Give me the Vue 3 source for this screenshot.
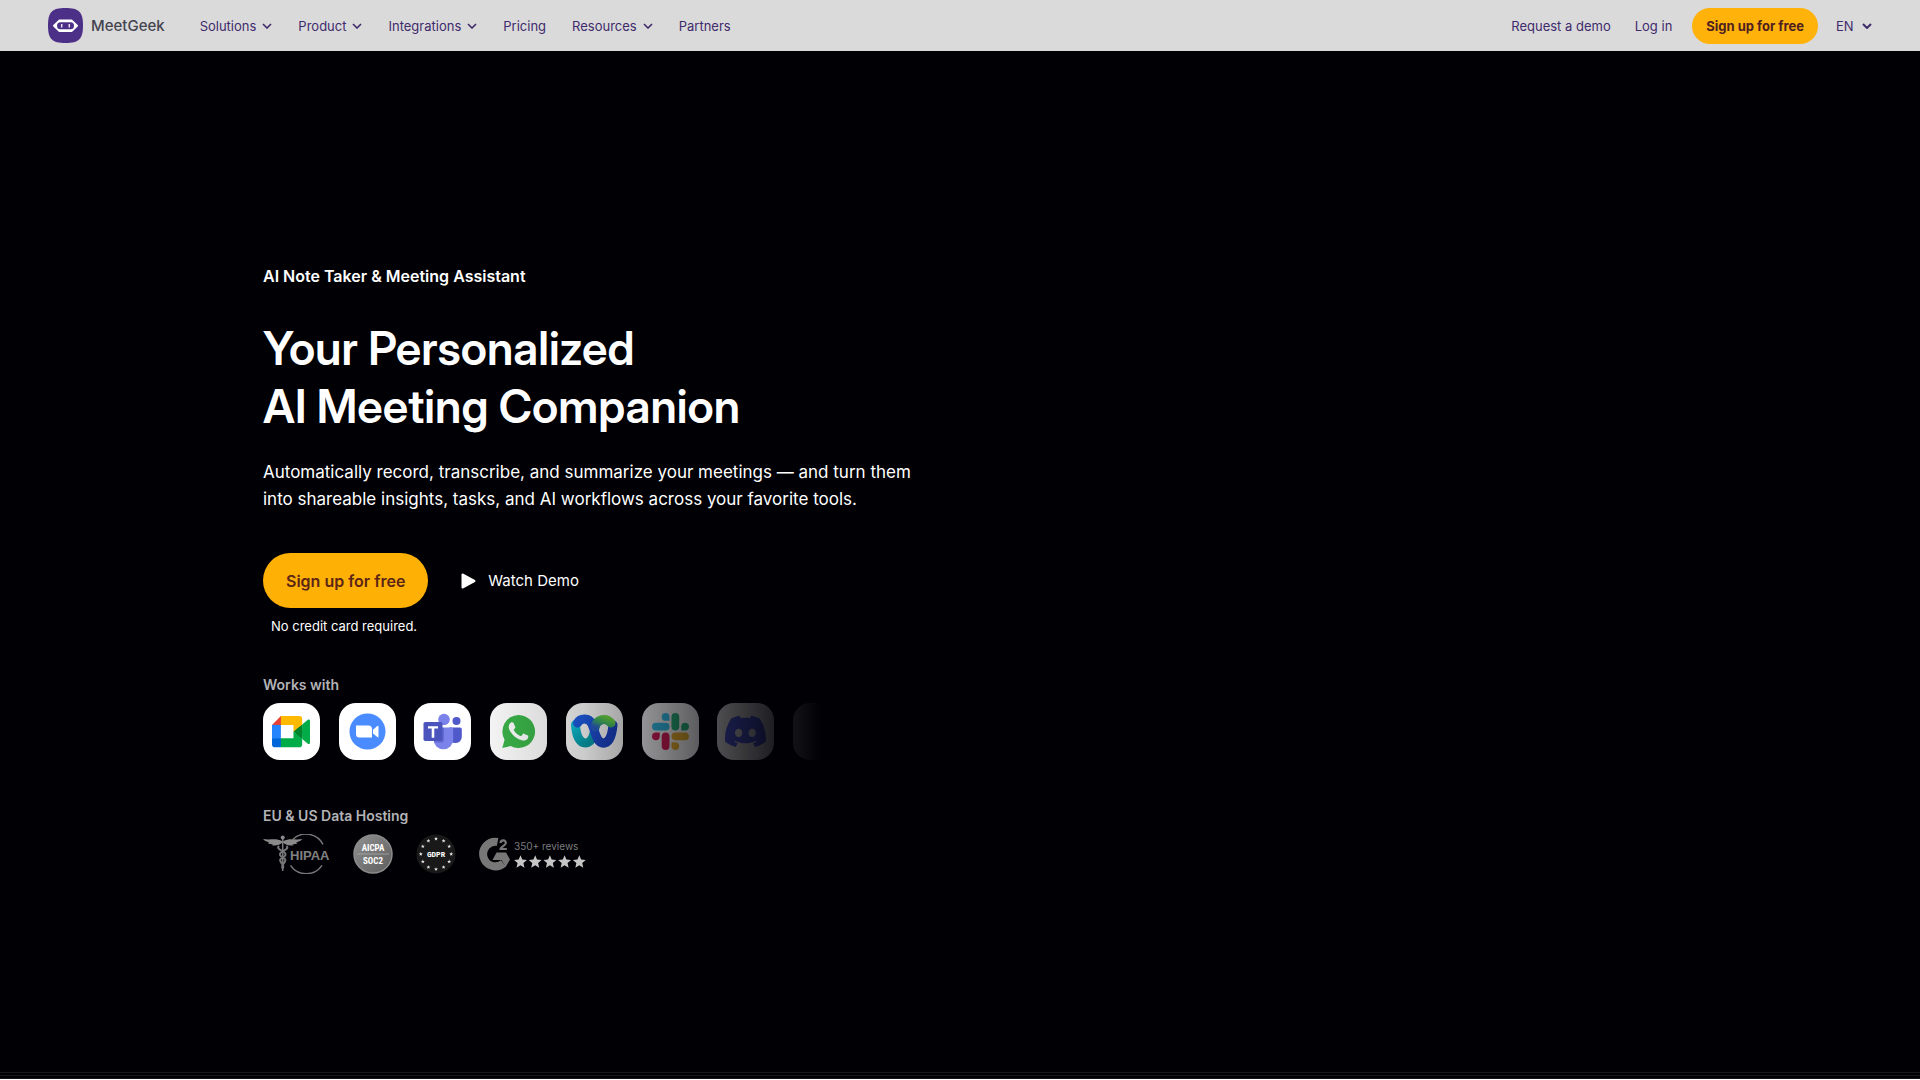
<template>
  <div class="page">
    <header class="header">
      <a class="brand" href="#">
        <svg class="brand-logo" viewBox="0 0 35 35" aria-hidden="true">
          <path fill="#4c3087" d="M17.500 0C31 0 35 4 35 17.500S31 35 17.500 35 0 31 0 17.500 4 0 17.500 0z" />
          <path fill="#fff" stroke="#fff" stroke-width="2" stroke-linejoin="round" d="M6 17.800l5.500-5.300h12l5.500 5.300-5.500 5.300h-12z" />
          <rect x="9" y="14.300" width="17" height="7" rx="3.500" fill="#4c3087" />
          <path stroke="#e6e0f0" stroke-width="1.500" d="M13.700 16v3.400M21.300 16v3.400" />
        </svg>
        <span>MeetGeek</span>
      </a>
      <nav class="nav">
        <template v-for="item in navItems" :key="item.label">
          <button v-if="item.menu" type="button" class="nav-item">
            {{ item.label }}
            <svg class="chevron" viewBox="0 0 10 6" aria-hidden="true"><path d="M1 1l4 4 4-4" /></svg>
          </button>
          <a v-else href="#" class="nav-item">{{ item.label }}</a>
        </template>
      </nav>
      <div class="actions">
        <a href="#" class="nav-item">Request a demo</a>
        <a href="#" class="nav-item">Log in</a>
        <button type="button" class="signup-small">Sign up for free</button>
        <label class="language">
          <select v-model="language" aria-label="EN">
            <option>EN</option>
          </select>
          <svg class="chevron" viewBox="0 0 10 6" aria-hidden="true"><path d="M1 1l4 4 4-4" /></svg>
        </label>
      </div>
    </header>

    <main class="hero">
      <p class="eyebrow">AI Note Taker &amp; Meeting Assistant</p>
      <h1>Your Personalized<br>AI Meeting Companion</h1>
      <p class="lead">
        Automatically record, transcribe, and summarize your meetings — and turn them<br>
        into shareable insights, tasks, and AI workflows across your favorite tools.
      </p>
      <div class="cta">
        <button type="button" class="signup">Sign up for free</button>
        <button type="button" class="watch">
          <svg class="play" viewBox="0 0 15 16" aria-hidden="true">
            <path d="M1.500 1.500v13L13.500 8z" fill="#fff" stroke="#fff" stroke-width="2" stroke-linejoin="round" />
          </svg>
          Watch Demo
        </button>
      </div>
      <p class="note">No credit card required.</p>

      <h2>Works with</h2>
      <div class="apps">
        <div class="tile">
          <svg viewBox="0 0 57 57">
            <g transform="translate(9 13) scale(.434)">
              <path fill="#00832d" d="M49.500 36l8.530 9.750 11.470 7.330 2-17.020-2-16.640-11.690 6.440z" />
              <path fill="#0066da" d="M0 51.500V66c0 3.315 2.685 6 6 6h14.500l3-10.960-3-9.540-9.950-3z" />
              <path fill="#e94235" d="M20.500 0L0 20.500l10.550 3 9.950-3 2.950-9.410z" />
              <path fill="#2684fc" d="M20.500 20.500H0v31h20.500z" />
              <path fill="#00ac47" d="M82.600 8.680L69.500 19.420v33.660l13.160 10.790c1.970 1.540 4.850.135 4.850-2.370V11c0-2.535-2.945-3.925-4.910-2.320zM49.500 36v15.500h-29V72h43c3.315 0 6-2.685 6-6V53.080z" />
              <path fill="#ffba00" d="M63.500 0h-43v20.500h29V36l20-16.570V6c0-3.315-2.685-6-6-6z" />
            </g>
          </svg>
        </div>
        <div class="tile">
          <svg viewBox="0 0 57 57">
            <circle cx="28.500" cy="28.500" r="18" fill="#4a8cff" />
            <path fill="#fff" d="M17 22.500h12.500a3.500 3.500 0 0 1 3.500 3.500v8.500H20.500a3.500 3.500 0 0 1-3.500-3.500zM34 26.800l4.300-3.700q1.200-.8 1.200.6v9.800q0 1.400-1.200.6L34 30.400z" />
          </svg>
        </div>
        <div class="tile">
          <svg viewBox="0 0 57 57">
            <circle cx="42.500" cy="18" r="4" fill="#5059c9" />
            <path fill="#5059c9" d="M35 24.500h11a1.800 1.800 0 0 1 1.800 1.800V34a6.500 6.500 0 0 1-12.800 1z" />
            <circle cx="30" cy="16.500" r="5.800" fill="#7b83eb" />
            <path fill="#7b83eb" d="M22 24.500h15.500a1.700 1.700 0 0 1 1.700 1.700V36.500a9.800 9.800 0 0 1-19.600 0z" />
            <path fill="#464eb8" opacity=".45" d="M22 24.500h8v13a2 2 0 0 1-2 2h-8z" />
            <rect x="9.500" y="19" width="19" height="19" rx="1.800" fill="#4b53bc" />
            <path fill="#fff" d="M14 23.200h10v2.200h-3.700v9.400h-2.600v-9.400H14z" />
          </svg>
        </div>
        <div class="tile">
          <svg viewBox="0 0 57 57">
            <path fill="#3bb54a" d="M28.500 12a16.500 16.500 0 1 1-7.800 31L12.300 45l2.300-8.200A16.500 16.500 0 0 1 28.500 12z" />
            <path fill="#fff" transform="translate(9 9) scale(1.620)" d="M17.472 14.382c-.297-.149-1.758-.867-2.030-.967-.273-.099-.471-.148-.670.150-.197.297-.767.966-.940 1.164-.173.199-.347.223-.644.075-.297-.150-1.255-.463-2.390-1.475-.883-.788-1.480-1.761-1.653-2.059-.173-.297-.018-.458.130-.606.134-.133.298-.347.446-.520.149-.174.198-.298.298-.497.099-.198.050-.371-.025-.520-.075-.149-.669-1.612-.916-2.207-.242-.579-.487-.500-.669-.510-.173-.008-.371-.010-.570-.010-.198 0-.520.074-.792.372-.272.297-1.040 1.016-1.040 2.479 0 1.462 1.065 2.875 1.213 3.074.149.198 2.096 3.200 5.077 4.487.709.306 1.262.489 1.694.625.712.227 1.360.195 1.871.118.571-.085 1.758-.719 2.006-1.413.248-.694.248-1.289.173-1.413-.074-.124-.272-.198-.570-.347" />
          </svg>
        </div>
        <div class="tile">
          <svg viewBox="0 0 57 57">
            <defs>
              <linearGradient id="webex-teal" x1="0" y1="0" x2="0.600" y2="1">
                <stop offset="0" stop-color="#10c8e0" />
                <stop offset="1" stop-color="#079ca8" />
              </linearGradient>
              <linearGradient id="webex-blue" x1="0" y1="0" x2="1" y2="1">
                <stop offset="0" stop-color="#1f5fe8" />
                <stop offset="1" stop-color="#1c44c4" />
              </linearGradient>
              <linearGradient id="webex-green" x1="0" y1="1" x2="1" y2="0">
                <stop offset="0" stop-color="#2a5fc8" />
                <stop offset="0.500" stop-color="#3fb06a" />
                <stop offset="1" stop-color="#6edb45" />
              </linearGradient>
            </defs>
            <g fill="none" stroke-width="9" stroke-linecap="round">
              <path stroke="url(#webex-teal)" d="M9.500 21.500c.5 11 4 18.500 10 18.500 6.500 0 9-9 9.500-16" />
              <path stroke="#1c44c4" d="M47 22c-1 11-4 18-9.500 18" />
              <path stroke="url(#webex-blue)" d="M11.500 20c3-5.500 11.500-5.500 14.500 1 3 6.500 4 19 11.500 19" />
              <path stroke="url(#webex-green)" d="M29 24c2-8 11-10 16-4" />
            </g>
          </svg>
        </div>
        <div class="tile">
          <svg viewBox="0 0 57 57">
            <g transform="translate(10 10) scale(1.540)">
              <path fill="#e01e5a" d="M5.042 15.165a2.528 2.528 0 0 1-2.520 2.523A2.528 2.528 0 0 1 0 15.165a2.527 2.527 0 0 1 2.522-2.520h2.520v2.520zM6.313 15.165a2.527 2.527 0 0 1 2.521-2.520 2.527 2.527 0 0 1 2.521 2.520v6.313A2.528 2.528 0 0 1 8.834 24a2.528 2.528 0 0 1-2.521-2.522v-6.313z" />
              <path fill="#36c5f0" d="M8.834 5.042a2.528 2.528 0 0 1-2.521-2.520A2.528 2.528 0 0 1 8.834 0a2.528 2.528 0 0 1 2.521 2.522v2.520H8.834zM8.834 6.313a2.528 2.528 0 0 1 2.521 2.521 2.528 2.528 0 0 1-2.521 2.521H2.522A2.528 2.528 0 0 1 0 8.834a2.528 2.528 0 0 1 2.522-2.521h6.312z" />
              <path fill="#2eb67d" d="M18.956 8.834a2.528 2.528 0 0 1 2.522-2.521A2.528 2.528 0 0 1 24 8.834a2.528 2.528 0 0 1-2.522 2.521h-2.522V8.834zM17.688 8.834a2.528 2.528 0 0 1-2.523 2.521 2.527 2.527 0 0 1-2.520-2.521V2.522A2.527 2.527 0 0 1 15.165 0a2.528 2.528 0 0 1 2.523 2.522v6.312z" />
              <path fill="#ecb22e" d="M15.165 18.956a2.528 2.528 0 0 1 2.523 2.522A2.528 2.528 0 0 1 15.165 24a2.527 2.527 0 0 1-2.520-2.522v-2.522h2.520zM15.165 17.688a2.527 2.527 0 0 1-2.520-2.523 2.526 2.526 0 0 1 2.520-2.520h6.313A2.527 2.527 0 0 1 24 15.165a2.528 2.528 0 0 1-2.522 2.523h-6.313z" />
            </g>
          </svg>
        </div>
        <div class="tile">
          <svg viewBox="0 0 57 57">
            <path fill="#5865f2" transform="translate(8 8) scale(1.700)" d="M20.317 4.370a19.791 19.791 0 0 0-4.885-1.515.074.074 0 0 0-.079.037c-.211.375-.445.865-.608 1.250-1.845-.276-3.680-.276-5.487 0-.164-.393-.406-.874-.618-1.250a.077.077 0 0 0-.079-.037 19.736 19.736 0 0 0-4.885 1.515.070.070 0 0 0-.032.028C.533 9.046-.319 13.580.099 18.058a.082.082 0 0 0 .031.056c2.053 1.508 4.041 2.423 5.993 3.029a.078.078 0 0 0 .084-.028c.462-.630.873-1.295 1.226-1.994a.076.076 0 0 0-.042-.106c-.653-.248-1.274-.550-1.872-.892a.077.077 0 0 1-.008-.128c.126-.094.252-.192.372-.291a.074.074 0 0 1 .078-.011c3.928 1.793 8.180 1.793 12.061 0a.074.074 0 0 1 .079.010c.120.099.246.198.373.292a.077.077 0 0 1-.007.128 12.299 12.299 0 0 1-1.873.891.077.077 0 0 0-.041.107c.360.698.772 1.363 1.225 1.993a.076.076 0 0 0 .084.029c1.961-.607 3.950-1.522 6.002-3.029a.077.077 0 0 0 .031-.055c.500-5.177-.838-9.674-3.549-13.660a.061.061 0 0 0-.031-.029zM8.020 15.331c-1.183 0-2.157-1.086-2.157-2.419 0-1.333.956-2.419 2.157-2.419 1.211 0 2.176 1.095 2.157 2.419 0 1.333-.956 2.419-2.157 2.419zm7.975 0c-1.183 0-2.157-1.086-2.157-2.419 0-1.333.955-2.419 2.157-2.419 1.211 0 2.176 1.095 2.157 2.419 0 1.333-.946 2.419-2.157 2.419z" />
          </svg>
        </div>
        <div class="tile"></div>
      </div>

      <h2>EU &amp; US Data Hosting</h2>
      <div class="badges">
        <svg class="hipaa" viewBox="0 0 67 40">
          <g fill="none" stroke="#777" stroke-width="1.500">
            <path d="M30 5.300A19 19 0 0 1 60 10.500M27.500 31.300A19 19 0 0 0 59 31.300" />
            <path d="M19.700 3v34" stroke-width="1.600" />
            <path d="M16 12c-4 4 8 5 6.500 9s-7 2.500-5 6.500 4 3 2.500 7M23.500 12c4 4-8 5-6.500 9s7 2.500 5 6.500-4 3-2.500 7" stroke-width="2" />
          </g>
          <g fill="#8a8a8a">
            <path d="M19.500 7.500C13 3.500 8 6.500 0 5c2.500 2.800 5 3 6.500 3.200-.8.400-1.500.500-2 .6 2 1.600 4 1.500 5.500 1.300-.5.500-1 .8-1.400 1 4 1.300 8-.1 10.900-2.600z" />
            <path d="M19.900 7.500C26.400 3.500 31.400 6.500 39.400 5c-2.500 2.800-5 3-6.500 3.200.8.400 1.500.500 2 .6-2 1.600-4 1.500-5.500 1.300.5.500 1 .8 1.400 1-4 1.300-8-.1-10.900-2.600z" />
            <circle cx="19.700" cy="3.500" r="2" />
          </g>
          <text x="27" y="26" class="hipaa-text">HIPAA</text>
        </svg>
        <svg class="round" viewBox="0 0 40 40">
          <defs>
            <linearGradient id="soc-fill" x1="0" y1="0" x2="1" y2="1">
              <stop offset="0" stop-color="#929292" />
              <stop offset="1" stop-color="#5c5c5c" />
            </linearGradient>
          </defs>
          <circle cx="20" cy="20" r="19" fill="url(#soc-fill)" stroke="#8c8c8c" stroke-width="1.500" />
          <path stroke="#b0b0b0" stroke-width="0.700" d="M4 20h32" />
          <text x="20" y="17" class="soc-text">AICPA</text>
          <text x="20" y="30" class="soc-text">SOC2</text>
        </svg>
        <svg class="round" viewBox="0 0 40 40">
          <circle cx="20" cy="20" r="19.500" fill="#191919" />
          <path
            v-for="n in 12"
            :key="n"
            :transform="`rotate(${n * 30} 20 20) translate(20 4.800) rotate(${-n * 30}) scale(.22)`"
            :d="starPath"
            fill="#e4e4e4"
          />
          <text x="20" y="23" class="gdpr-text">GDPR</text>
        </svg>
        <div class="rating">
          <svg class="g2" viewBox="0 0 32 34">
            <path fill="none" stroke="#777" stroke-width="8" d="M18.600 4.900A12.300 12.300 0 1 0 24.400 26.400" />
            <path fill="#777" d="M17.500 15.600H27l4 6.900-4.300 7.500-4.200-7h-9z" />
            <path fill="none" stroke="#777" stroke-width="2.200" d="M21.500 6c.3-3.800 5.800-3.300 5.300.2-.4 2.500-5 3.300-5.300 5.800h6.300" />
          </svg>
          <div class="reviews">
            <span>350+ reviews</span>
            <svg class="stars" viewBox="0 0 73 13">
              <path
                v-for="n in 5"
                :key="n"
                :transform="`translate(${n * 14.700 - 8.200} 7) scale(.75)`"
                :d="starPath"
                fill="#c6c6c6"
              />
            </svg>
          </div>
        </div>
      </div>
    </main>
    <div class="edge"></div>
  </div>
</template>

<script setup>
import { ref } from 'vue';

const language = ref('EN');
const starPath = 'M0-9l2.400 5.800 6.200.5-4.700 4.100 1.400 6.100L0 4.200l-5.300 3.300 1.400-6.100-4.700-4.100 6.200-.5z';

const navItems = ref([
  { label: 'Solutions', menu: true },
  { label: 'Product', menu: true },
  { label: 'Integrations', menu: true },
  { label: 'Pricing', menu: false },
  { label: 'Resources', menu: true },
  { label: 'Partners', menu: false },
]);
</script>

<style>
body {
  margin: 0;
  background: #fff;
}
</style>

<style scoped>
.page {
  display: flex;
  flex-direction: column;
  min-height: calc(100vh - 1px);
  background: #000005;
  color: #fff;
  font-family: Inter, "Liberation Sans", sans-serif;
}

button,
select {
  padding: 0;
  border: 0;
  background: none;
  color: inherit;
  font: inherit;
  cursor: pointer;
}

a {
  color: inherit;
  text-decoration: none;
}

.header {
  display: flex;
  align-items: center;
  box-sizing: border-box;
  height: 51px;
  padding: 0 48px;
  background: #dadadb;
  color: #3f2a6b;
  font-size: 13px;
  line-height: 20px;
}

.brand {
  display: flex;
  align-items: center;
  gap: 8px;
  color: #45434f;
  font-size: 15px;
  font-weight: 500;
}

.brand-logo {
  width: 35px;
  height: 35px;
}

.nav {
  display: flex;
  gap: 26px;
  margin-left: 35px;
}

.nav-item {
  display: flex;
  align-items: center;
  gap: 6px;
}

.chevron {
  width: 10px;
  height: 6px;
  fill: none;
  stroke: currentColor;
  stroke-width: 2;
}

.nav .chevron {
  stroke-width: 1.600;
}

.actions {
  display: flex;
  align-items: center;
  gap: 24px;
  margin-left: auto;
}

.signup-small {
  height: 36px;
  margin: 0 -6px 0 -4px;
  padding: 0 14px;
  border-radius: 18px;
  background: #ffb20a;
  color: #4f2020;
  font-weight: 700;
}

.language {
  display: flex;
  align-items: center;
  gap: 8px;
}

.language select {
  appearance: none;
}

.hero {
  flex: 1;
  width: 720px;
  padding: 212px 0 60px;
  margin-left: 263px;
}

p,
h1,
h2 {
  margin: 0;
}

.eyebrow {
  font-size: 16px;
  font-weight: 600;
  line-height: 26px;
}

h1 {
  margin-top: 30px;
  font-family: "Inter Display", Inter, "Liberation Sans", sans-serif;
  font-size: 46px;
  font-weight: 600;
  line-height: 58px;
}

.lead {
  margin-top: 24px;
  font-size: 17px;
  line-height: 27px;
}

.cta {
  display: flex;
  align-items: center;
  gap: 33px;
  margin-top: 40px;
}

.signup {
  height: 55px;
  padding: 0 23px;
  border-radius: 28px;
  background: #ffb005;
  color: #5c2516;
  font-size: 16px;
  font-weight: 600;
}

.watch {
  display: flex;
  align-items: center;
  gap: 12px;
  font-size: 15px;
}

.play {
  width: 15px;
  height: 16px;
}

.note {
  margin: 8px 0 0 8px;
  font-size: 13px;
  line-height: 20px;
}

h2 {
  margin-top: 39px;
  color: #b3b3b6;
  font-size: 14px;
  font-weight: 600;
  line-height: 20px;
}

.apps {
  display: flex;
  justify-content: space-between;
  width: 587px;
  margin-top: 8px;
  mask-image: linear-gradient(90deg, #000 200px, rgba(0, 0, 0, 0.8) 320px, rgba(0, 0, 0, 0.35) 440px, rgba(0, 0, 0, 0.12) 510px, transparent 560px);
}

.tile {
  width: 57px;
  height: 57px;
  border-radius: 17px;
  background: #fff;
}

.tile svg {
  display: block;
}

.apps + h2 {
  margin-top: 46px;
}

.badges {
  display: flex;
  align-items: center;
  gap: 23px;
  margin-top: 8px;
}

.hipaa {
  width: 67px;
  height: 40px;
}

.round {
  width: 40px;
  height: 40px;
}

.hipaa-text {
  fill: #808080;
  font: bold 13px "Liberation Sans", sans-serif;
}

.soc-text,
.gdpr-text {
  fill: #fff;
  font: bold 9px "Roboto Condensed", Roboto, sans-serif;
  text-anchor: middle;
}

.gdpr-text {
  font-size: 8px;
}

.rating {
  display: flex;
  align-items: center;
  gap: 3px;
}

.g2 {
  width: 32px;
  height: 34px;
}

.reviews {
  display: flex;
  flex-direction: column;
  gap: 2px;
  color: #7c7c7c;
  font-size: 10px;
  line-height: 13px;
}

.stars {
  width: 73px;
  height: 13px;
}

.edge {
  height: 7px;
  background: repeating-linear-gradient(#17171c 0 1px, #000005 1px 3px);
}
</style>
